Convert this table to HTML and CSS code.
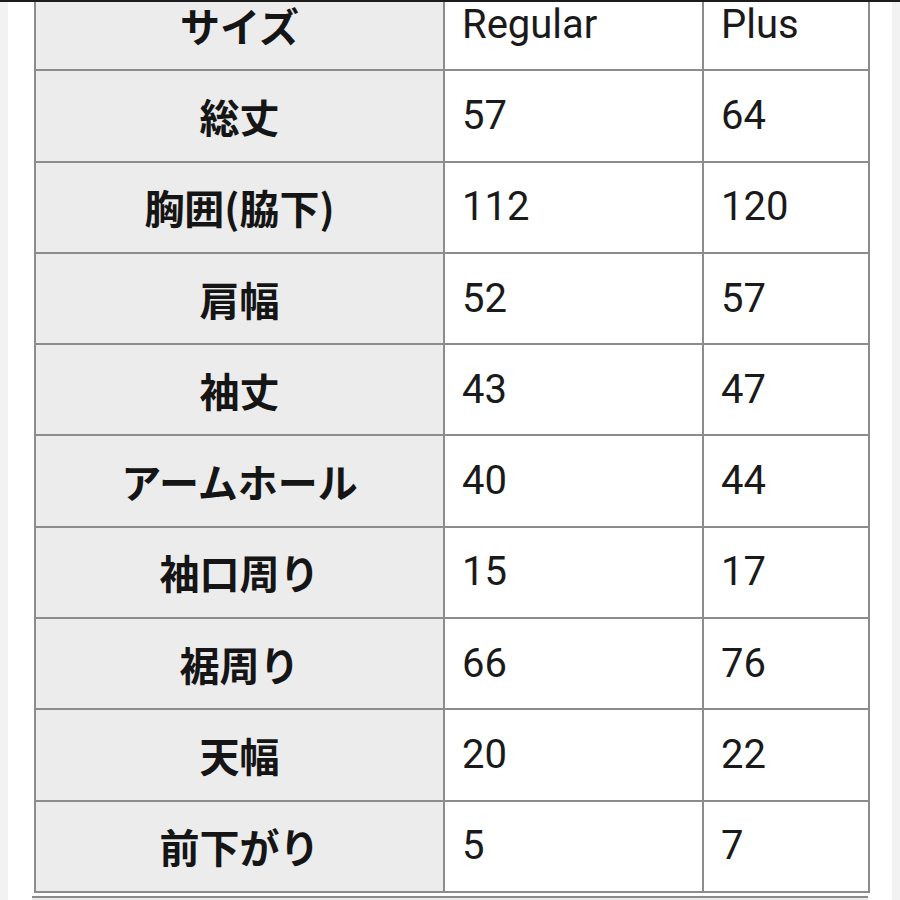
FILE: index.html
```html
<!DOCTYPE html>
<html lang="ja">
<head>
<meta charset="utf-8">
<title>サイズ表</title>
<link rel="stylesheet" href="styles.css">
</head>
<body>
<div class="page">
  <table class="size-table">
    <colgroup>
      <col class="c1">
      <col class="c2">
      <col class="c3">
    </colgroup>
    <tr><th>サイズ</th><td>Regular</td><td>Plus</td></tr>
    <tr><th>総丈</th><td>57</td><td>64</td></tr>
    <tr><th>胸囲(脇下)</th><td>112</td><td>120</td></tr>
    <tr><th>肩幅</th><td>52</td><td>57</td></tr>
    <tr><th>袖丈</th><td>43</td><td>47</td></tr>
    <tr><th>アームホール</th><td>40</td><td>44</td></tr>
    <tr><th>袖口周り</th><td>15</td><td>17</td></tr>
    <tr><th>裾周り</th><td>66</td><td>76</td></tr>
    <tr><th>天幅</th><td>20</td><td>22</td></tr>
    <tr><th>前下がり</th><td>5</td><td>7</td></tr>
  </table>
  <div class="next-table"></div>
</div>
</body>
</html>
```

FILE: styles.css
```css
html, body {
  margin: 0;
  padding: 0;
}
body {
  background: #f2f2f2;
  border-top: 2px solid #1c1c1c;
  height: 898px;
  overflow: hidden;
}
.page {
  margin: 0 8px;
  background: #ffffff;
  padding: 0 24px 0 26px;
  height: 898px;
  overflow: hidden;
}
.size-table {
  width: 834px;
  margin-top: -24px;
  border-collapse: collapse;
  table-layout: fixed;
  font-family: Roboto, "Noto Sans", "Noto Sans CJK JP", sans-serif;
  font-size: 40px;
  color: #1a1a1a;
}
.c1 { width: 409px; }
.c2 { width: 259px; }
.c3 { width: 166px; }
.size-table th,
.size-table td {
  border: 2px solid #8c8c8c;
  height: 89.3px;
  padding: 0;
  vertical-align: middle;
  line-height: 1;
}
.size-table th {
  background: #ececec;
  font-family: "Noto Sans CJK JP", sans-serif;
  font-weight: 700;
  text-align: center;
  color: #151515;
}
.size-table td {
  background: #ffffff;
  text-align: left;
  padding-left: 17px;
  font-weight: 400;
}
.next-table {
  margin-top: 3px;
  margin-left: -2px;
  border-top: 2px solid #8c8c8c;
  height: 10px;
  background: #ececec;
}
```
